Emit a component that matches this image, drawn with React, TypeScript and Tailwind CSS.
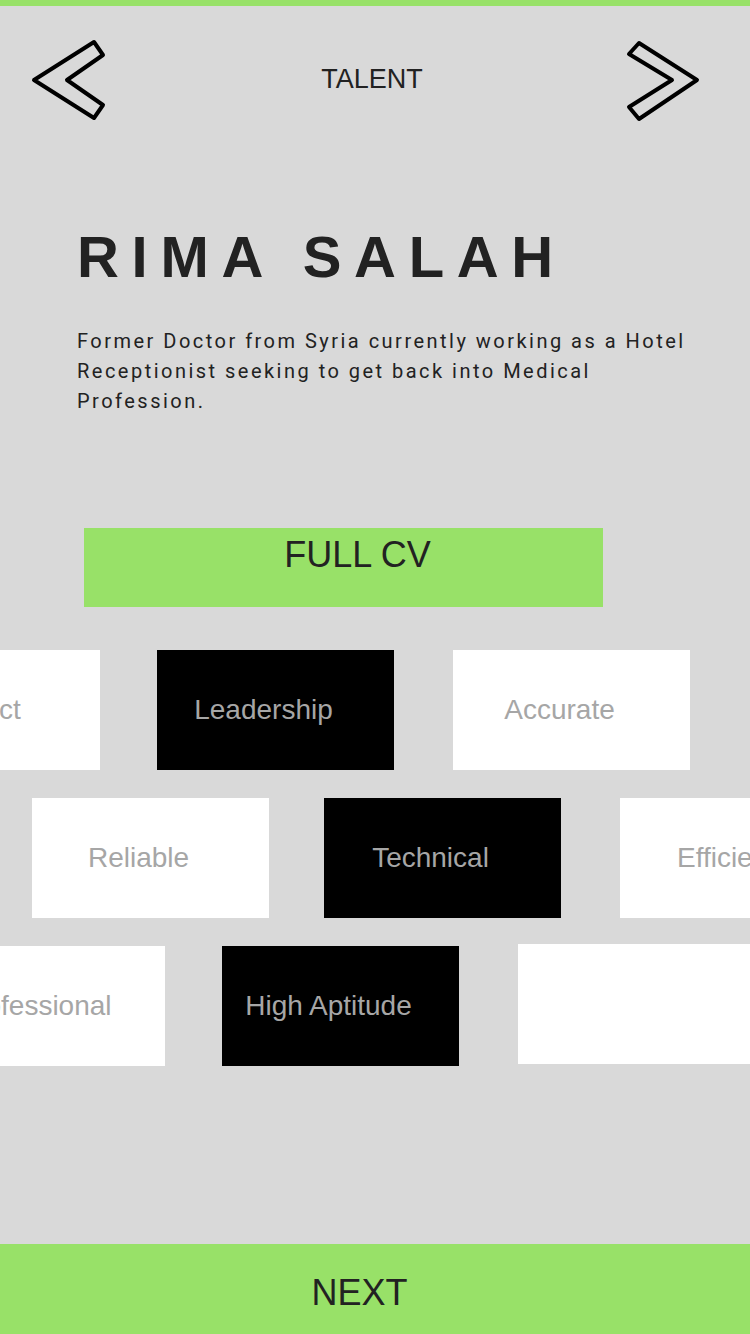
import React from "react";

const tiles: { label: string; dark?: boolean; ml: string; mt?: string }[][] = [
    [
        { label: "Respect", ml: "ml-[-137px]" },
        { label: "Leadership", dark: true, ml: "ml-[57px]" },
        { label: "Accurate", ml: "ml-[59px]" },
    ],
    [
        { label: "Reliable", ml: "ml-[32px]" },
        { label: "Technical", dark: true, ml: "ml-[55px]" },
        { label: "Efficient", ml: "ml-[59px]" },
    ],
    [
        { label: "Professional", ml: "ml-[-72px]" },
        { label: "High Aptitude", dark: true, ml: "ml-[57px]" },
        { label: "", ml: "ml-[59px]", mt: "mt-[-2px]" },
    ],
];

function Chevron({ dir }: { dir: "left" | "right" }) {
    const points = dir === "left"
        ? "4,42 64,4 73,17 37,42 73,67 64,80"
        : "15,5 73,42 15,81 5,69 48,42 5,16";
    return (
        <svg width="78" height="86" viewBox="0 0 78 86" className="shrink-0">
            <polygon points={points} fill="none" stroke="#000" strokeWidth="4" strokeLinejoin="round" />
        </svg>
    );
}

export default function App() {
    return (
        <div className="w-[750px] h-[1334px] bg-[#d9d9d9] flex flex-col overflow-hidden text-[#222]" style={{ fontFamily: '"Liberation Sans", Arial, sans-serif' }}>
            <div className="h-[6px] bg-[#98e168]" />

            <div className="flex items-start pt-[32px] pl-[30px] pr-[48px]">
                <Chevron dir="left" />
                <div className="flex-1 text-center pl-3 mt-[21px] text-[27px]">TALENT</div>
                <Chevron dir="right" />
            </div>

            <h1 className="mt-[104px] pl-[77px] text-[58px] leading-none font-bold tracking-[12.7px]">RIMA SALAH</h1>

            <p className="mt-[40px] pl-[77px] text-[20px] leading-[30px] tracking-[2.48px]" style={{ fontFamily: 'Roboto, sans-serif' }}>
                Former Doctor from Syria currently working as a Hotel<br />
                Receptionist seeking to get back into Medical<br />
                Profession.
            </p>

            <div className="mt-[112px] ml-[84px] w-[519px] h-[79px] bg-[#98e168] text-center pl-[28px] text-[36px]">
                FULL CV
            </div>

            <div className="mt-[43px] flex flex-col gap-[28px]">
                {tiles.map((row, i) => (
                    <div key={i} className="flex items-start">
                        {row.map((t, j) => (
                            <div
                                key={j}
                                className={`${t.ml} ${t.mt ?? ""} shrink-0 w-[237px] h-[120px] pr-6 flex items-center justify-center text-[28px] text-[#a6a6a6] ${t.dark ? "bg-black" : "bg-white"}`}
                            >
                                {t.label}
                            </div>
                        ))}
                    </div>
                ))}
            </div>

            <div className="mt-auto h-[90px] bg-[#98e168] text-center pr-[31px] pt-[22px] text-[36px]">NEXT</div>
        </div>
    );
}
